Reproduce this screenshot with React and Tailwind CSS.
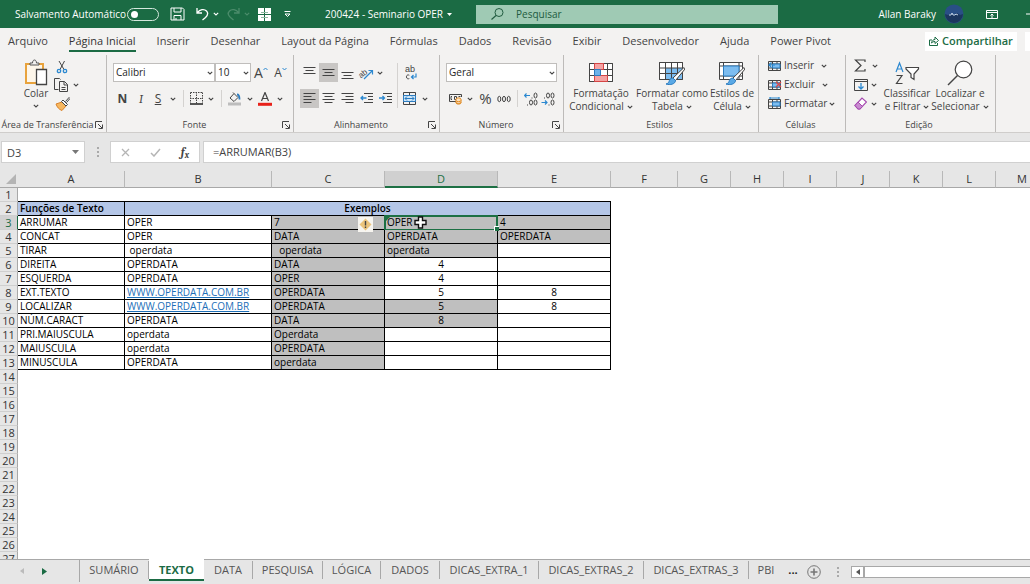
import clsx from "clsx";

const menuTabs = [
  "Arquivo",
  "Página Inicial",
  "Inserir",
  "Desenhar",
  "Layout da Página",
  "Fórmulas",
  "Dados",
  "Revisão",
  "Exibir",
  "Desenvolvedor",
  "Ajuda",
  "Power Pivot",
];

const columns = [
  { name: "A", width: "w-[107px]" },
  { name: "B", width: "w-[147px]" },
  { name: "C", width: "w-[113px]" },
  { name: "D", width: "w-[113px]" },
  { name: "E", width: "w-[113px]" },
  { name: "F", width: "w-[67px]" },
  { name: "G", width: "w-[53px]" },
  { name: "H", width: "w-[53px]" },
  { name: "I", width: "w-[53px]" },
  { name: "J", width: "w-[53px]" },
  { name: "K", width: "w-[53px]" },
  { name: "L", width: "w-[53px]" },
  { name: "M", width: "w-[53px]" },
];

// Values of columns A to E, from row 3 on
const rows = [
  ["ARRUMAR", "OPER", "7", "OPER", "4"],
  ["CONCAT", "OPER", "DATA", "OPERDATA", "OPERDATA"],
  ["TIRAR", " operdata", "  operdata", "operdata", ""],
  ["DIREITA", "OPERDATA", "DATA", "4", ""],
  ["ESQUERDA", "OPERDATA", "OPER", "4", ""],
  ["EXT.TEXTO", "WWW.OPERDATA.COM.BR", "OPERDATA", "5", "8"],
  ["LOCALIZAR", "WWW.OPERDATA.COM.BR", "OPERDATA", "5", "8"],
  ["NÚM.CARACT", "OPERDATA", "DATA", "8", ""],
  ["PRI.MAIUSCULA", "operdata", "Operdata", "", ""],
  ["MAIUSCULA", "operdata", "OPERDATA", "", ""],
  ["MINUSCULA", "OPERDATA", "operdata", "", ""],
];

const grayCells = ["D3", "E3", "D4", "E4", "D5", "D9", "D10"];

const sheets = [
  { name: "SUMÁRIO", width: "w-[69px]" },
  { name: "TEXTO", width: "w-[55px]", active: true },
  { name: "DATA", width: "w-[49px]" },
  { name: "PESQUISA", width: "w-[70px]" },
  { name: "LÓGICA", width: "w-[58px]" },
  { name: "DADOS", width: "w-[59px]" },
  { name: "DICAS_EXTRA_1", width: "w-[99px]" },
  { name: "DICAS_EXTRAS_2", width: "w-[105px]" },
  { name: "DICAS_EXTRAS_3", width: "w-[105px]" },
];

const Icon = ({ w = 16, h = 16, className, children }) => (
  <svg
    width={w}
    height={h}
    viewBox={`0 0 ${w} ${h}`}
    fill="none"
    stroke="currentColor"
    className={clsx("shrink-0", className)}
    aria-hidden="true"
  >
    {children}
  </svg>
);

const Caret = ({ className }) => (
  <Icon w={6} h={4} className={className}>
    <path d="M.8.8 3 3 5.2.8" strokeWidth="1.1" />
  </Icon>
);

const Tool = ({ label, className, children }) => (
  <button
    aria-label={label}
    className={clsx("flex h-[19px] items-center justify-center", className)}
  >
    {children}
  </button>
);

const Divider = ({ className }) => (
  <div className={clsx("w-px shrink-0 bg-[#d4d2d0]", className)} />
);

const Group = ({ label, launcher, className, children }) => (
  <section
    className={clsx(
      "flex shrink-0 flex-col border-r border-[#bdbbb9]",
      className
    )}
  >
    <div className="flex-1">{children}</div>
    <div className="flex h-[14px] items-center pr-[3px] text-[9px]">
      <h2 className="flex-1 text-center whitespace-nowrap">{label}</h2>
      {launcher && (
        <button aria-label={`Opções de ${label}`}>
          <Icon w={8} h={8}>
            <path d="M.5 7V.5H7M3 3l4 4M7.5 3.5v4h-4" />
          </Icon>
        </button>
      )}
    </div>
  </section>
);

const Select = ({ label, value, className }) => (
  <div className={clsx("relative h-[19px]", className)}>
    <select
      aria-label={label}
      defaultValue={value}
      className="h-full w-full appearance-none border border-[#c0bebc] bg-white pl-[2px] text-[#262626]"
    >
      <option>{value}</option>
    </select>
    <Caret className="pointer-events-none absolute top-2 right-[2px]" />
  </div>
);

const Lines = ({ d }) => (
  <Icon w={13} h={13}>
    <path d={d} />
  </Icon>
);

const BigButton = ({ icon, first, second, className }) => (
  <button className={clsx("flex flex-col items-center pt-[3px]", className)}>
    <span className="flex h-[29px] items-center">{icon}</span>
    <span className="leading-[13px] whitespace-nowrap">{first}</span>
    <span className="flex items-center gap-[3px] leading-[13px] whitespace-nowrap">
      {second}
      <Caret />
    </span>
  </button>
);

const Brush = () => (
  <>
    <path d="M25 6.500 14 17l2.500 2.500L26 8z" fill="#fff" stroke="#444" />
    <path
      d="M14 17c-3 0-3.500 2-4 3.500-.5 1.500-1.500 2-3 2.500 4 1.500 9.500 0 9.500-3.500z"
      fill="#5aa9e6"
      stroke="#2b7cc0"
    />
  </>
);

const TitleBar = () => (
  <header className="flex h-7 shrink-0 items-center bg-[#1b6b44] text-[10px] text-white">
    <label className="flex w-[159px] shrink-0 items-center pl-[15px]">
      <span className="flex-1 whitespace-nowrap">Salvamento Automático</span>
      <input type="checkbox" role="switch" className="peer sr-only" />
      <span className="flex h-[13px] w-8 shrink-0 items-center rounded-full border border-[#d5e8dd] px-[3px]">
        <span className="h-[7px] w-[7px] rounded-full bg-white" />
      </span>
    </label>
    <div className="flex shrink-0 items-center pl-[11px]">
      <button aria-label="Salvar" className="w-[26px]">
        <Icon w={15} h={14}>
          <path d="M1 1h11.500L14 2.500V13H1zM4 1v4h7V1M4 13V8.500h7V13M6 13v-2" />
        </Icon>
      </button>
      <button aria-label="Desfazer" className="flex w-[31px] items-center gap-1">
        <Icon w={13} h={14}>
          <path d="M1 1v5h5M1.300 5.700C4 2.500 8 1.500 10.500 4s1 4.500-1 6.500L6.500 13" strokeWidth="1.300" />
        </Icon>
        <Caret />
      </button>
      <button aria-label="Refazer" className="flex w-[31px] items-center gap-1 text-[#4b8c6b]">
        <Icon w={13} h={14}>
          <path d="M12 1v5H7M11.700 5.700C9 2.500 5 1.500 2.500 4s-1 4.500 1 6.500L6.500 13" strokeWidth="1.300" />
        </Icon>
        <Caret />
      </button>
      <button aria-label="Janelas" className="w-[26px]">
        <Icon w={13} h={13} className="fill-white stroke-none">
          <path d="M0 0h6v6H0zM7 0h6v6H7zM0 7h6v6H0zM7 7h6v6H7z" />
          <path d="M3 4.500h7M3 9.500h7" stroke="#8fb9a2" />
        </Icon>
      </button>
      <button aria-label="Personalizar" className="w-[41px]">
        <Icon w={7} h={7}>
          <path d="M.5.500h6M1 3l2.500 2.500L6 3z" />
        </Icon>
      </button>
    </div>
    <button className="flex w-[151px] shrink-0 items-center gap-1 whitespace-nowrap">
      200424 - Seminario OPER
      <Icon w={5} h={3} className="fill-white stroke-none">
        <path d="M0 0h5L2.500 3z" />
      </Icon>
    </button>
    <div className="flex h-[19px] min-w-0 flex-1 items-center gap-3 bg-[#9fcab4] pl-[15px] text-[#215c40]">
      <Icon w={13} h={12}>
        <circle cx="8" cy="4.500" r="4" />
        <path d="M5 7.500.500 11.500" strokeWidth="1.200" />
      </Icon>
      <input
        aria-label="Pesquisar"
        placeholder="Pesquisar"
        className="min-w-0 flex-1 bg-transparent outline-none placeholder:text-[#215c40]"
      />
    </div>
    <div className="flex w-[252px] shrink-0 items-center">
      <span className="w-[166px] pr-2 text-right">Allan Baraky</span>
      <Icon w={20} h={20} className="stroke-none">
        <circle cx="10" cy="10" r="9.500" fill="#294f86" />
        <path d="M1 10a9 9 0 0 0 18 0l-3 1-3-2-3 2-3-1-3 1z" fill="#1b365e" />
        <path d="M5 11h2l1-2 1 2h2l1-1 2 1" stroke="#c3d3e6" />
      </Icon>
      <button aria-label="Opções da faixa de opções" className="ml-[22px]">
        <Icon w={12} h={9}>
          <path d="M.5.500h11v8H.500zM.500 2.500h11M6 8V4M4.500 5.500 6 4l1.500 1.500" />
        </Icon>
      </button>
      <Icon w={4} h={2} className="ml-auto">
        <path d="M0 1h4" />
      </Icon>
    </div>
  </header>
);

const MenuBar = () => (
  <nav className="flex h-[26px] shrink-0 items-center gap-[21px] bg-[#f3f2f1] pl-2 text-[11px]">
    {menuTabs.map((tab) => (
      <button
        key={tab}
        className={clsx(
          "h-[22px] border-b-2 pt-[2px] whitespace-nowrap",
          tab === "Página Inicial"
            ? "border-[#1b6b44] font-medium text-[#333]"
            : "border-transparent"
        )}
      >
        {tab}
      </button>
    ))}
    <div className="ml-auto flex gap-2">
      <button className="flex h-[19px] w-[92px] items-center justify-center gap-[3px] bg-white font-semibold text-[#1b6b44]">
        <Icon w={10} h={10}>
          <path d="M3 4H.500v5.500h8V7M2.500 7C3 4.500 4.500 3.500 6 3.500V1l3.500 3.500L6 7.500V5.500C4.500 5.500 3.500 6 2.500 7z" />
        </Icon>
        Compartilhar
      </button>
      <div className="h-[19px] w-[5px] bg-white" />
    </div>
  </nav>
);

const ClipboardGroup = () => (
  <Group label="Área de Transferência" launcher className="w-[107px]">
    <div className="flex">
      <button className="ml-[18px] flex w-9 flex-col items-center pt-1">
        <Icon w={24} h={27}>
          <path d="M2 5h17v19H2z" stroke="#e8a33d" strokeWidth="2" fill="#fdf6ea" />
          <path d="M6 6V4h2.500c0-4 4-4 4 0H15v2z" fill="#f3f2f1" stroke="#555" />
          <path d="M12.500 10.500h10v15h-10z" fill="#fff" stroke="#444" strokeWidth="1.300" />
        </Icon>
        <span className="mt-[1px] mb-1 leading-[13px]">Colar</span>
        <Caret />
      </button>
      <div>
        <Tool label="Recortar" className="w-4">
          <Icon w={12} h={14} className="mt-1">
            <path d="M3 1l5 8.500M8.500 1 4 9.500" />
            <circle cx="3" cy="11" r="1.700" stroke="#2b88d0" strokeWidth="1.300" />
            <circle cx="9" cy="11" r="1.700" stroke="#2b88d0" strokeWidth="1.300" />
          </Icon>
        </Tool>
        <Tool label="Copiar" className="mt-[1px] gap-[5px]">
          <Icon w={14} h={14}>
            <path d="M4.500 11.500H.500v-11h5l1 1M5.500 3.500h5l3 3v7h-8zM10 3.500v3.500h3.500M7.500 9.500h4M7.500 11.500h4" />
          </Icon>
          <Caret />
        </Tool>
        <Tool label="Pincel de Formatação" className="w-4">
          <Icon w={15} h={15}>
            <path d="M1 8l6-2 4 4-4 4.500C4 13.500 2 11 1 8z" fill="#f7b860" stroke="#d9822b" />
            <path d="M6.500 5.500 11 10l1.500-1.500L8 4zM10.500 5.500l3.500-4 1 1-3.500 4" fill="#fff" stroke="#444" />
          </Icon>
        </Tool>
      </div>
    </div>
  </Group>
);

const FontGroup = () => (
  <Group label="Fonte" launcher className="w-[187px]">
    <div className="flex pt-2 pl-[6px]">
      <Select label="Fonte" value="Calibri" className="w-[102px]" />
      <Select label="Tamanho da fonte" value="10" className="w-9" />
      <Tool label="Aumentar fonte" className="w-[20px] text-[14px]">
        A
        <Icon w={5} h={4} className="mb-2 text-[#2b88d0]">
          <path d="M.5 3 2.500 1l2 2" />
        </Icon>
      </Tool>
      <Tool label="Diminuir fonte" className="w-[19px] text-[12px]">
        A
        <Icon w={5} h={4} className="mb-2 text-[#2b88d0]">
          <path d="M.5 1l2 2 2-2" />
        </Icon>
      </Tool>
    </div>
    <div className="flex items-center pt-[7px] pl-[6px] text-[12px]">
      <Tool label="Negrito" className="w-[19px] font-bold">N</Tool>
      <Tool label="Itálico" className="w-[18px] font-serif italic">I</Tool>
      <Tool label="Sublinhado" className="w-4 underline">S</Tool>
      <Tool label="Mais sublinhados" className="w-[14px]"><Caret /></Tool>
      <Divider className="mx-[3px] h-[17px]" />
      <Tool label="Bordas" className="w-[18px]">
        <Icon w={13} h={13}>
          <path d="M.500.500h12M.500.500v11M12.500.500v11M6.500 0v12M0 6.500h13" strokeDasharray="1.500 1" />
          <path d="M0 12h13" strokeWidth="1.800" />
        </Icon>
      </Tool>
      <Tool label="Mais bordas" className="w-[12px]"><Caret /></Tool>
      <Divider className="mx-1 h-[17px]" />
      <Tool label="Cor de preenchimento" className="w-[18px]">
        <Icon w={14} h={14}>
          <path d="M6 1.500 2 6l4 3.500L10 5.500zM6 1.500 5 .500" />
          <path d="M9 2.500c2 0 2.500 1.500 2.500 5" stroke="#2b7cc0" strokeWidth="1.800" />
          <path d="M0 12h13" stroke="#bdbdbd" strokeWidth="3" />
        </Icon>
      </Tool>
      <Tool label="Mais cores de preenchimento" className="w-[12px]"><Caret /></Tool>
      <Tool label="Cor da fonte" className="w-[18px]">
        <Icon w={14} h={14}>
          <path d="M3.500 9 7 .500 10.500 9M4.700 6.500h4.600" strokeWidth="1.200" />
          <path d="M0 12.300h14" stroke="#e8211a" strokeWidth="3" />
        </Icon>
      </Tool>
      <Tool label="Mais cores da fonte" className="w-[12px]"><Caret /></Tool>
    </div>
  </Group>
);

const AlignGroup = () => (
  <Group label="Alinhamento" launcher className="w-[146px]">
    <div className="flex pt-2 pl-[6px]">
      <div className="w-[97px]">
        <div className="flex">
          <Tool label="Alinhar em cima" className="w-[19px]"><Lines d="M.5 1.500h12M2.500 4.500h8M.500 7.500h12" /></Tool>
          <Tool label="Alinhar no meio" className="w-[19px] bg-[#c8c6c4]"><Lines d="M.5 3.500h12M2.500 6.500h8M.500 9.500h12" /></Tool>
          <Tool label="Alinhar embaixo" className="w-[19px]"><Lines d="M.5 6.500h12M2.500 9.500h8M.500 12.500h12" /></Tool>
          <Tool label="Orientação" className="w-[18px]">
            <Icon w={15} h={14} className="overflow-visible">
              <text x="-1" y="10" fontSize="8" fontFamily="Liberation Sans" stroke="none" fill="#444" transform="rotate(-40 4 7)">ab</text>
              <path d="M5 13 13 5M9.500 4.500h4v4" stroke="#2b88d0" strokeWidth="1.200" />
            </Icon>
          </Tool>
          <Tool label="Mais orientações" className="w-[10px]"><Caret /></Tool>
        </div>
        <div className="mt-[7px] flex">
          <Tool label="Alinhar à esquerda" className="w-[19px] bg-[#c8c6c4]"><Lines d="M.5 1.500h12M.500 4.500h8M.500 7.500h12M.500 10.500h8" /></Tool>
          <Tool label="Centralizar" className="w-[19px]"><Lines d="M.5 1.500h12M2.500 4.500h8M.500 7.500h12M2.500 10.500h8" /></Tool>
          <Tool label="Alinhar à direita" className="w-[19px]"><Lines d="M.5 1.500h12M4.500 4.500h8M.500 7.500h12M4.500 10.500h8" /></Tool>
          <Tool label="Diminuir recuo" className="w-[19px]">
            <Icon w={13} h={13}>
              <path d="M4 1.500h9M8 4.500h5M8 7.500h5M4 10.500h9" />
              <path d="M1 6h5.500M3 4 1 6l2 2" stroke="#2b88d0" strokeWidth="1.300" />
            </Icon>
          </Tool>
          <Tool label="Aumentar recuo" className="w-[19px]">
            <Icon w={13} h={13}>
              <path d="M4 1.500h9M8 4.500h5M8 7.500h5M4 10.500h9" />
              <path d="M0 6h5.500M3.500 4l2 2-2 2" stroke="#2b88d0" strokeWidth="1.300" />
            </Icon>
          </Tool>
        </div>
      </div>
      <Divider className="h-[45px]" />
      <div className="pl-[3px]">
        <Tool label="Quebrar texto" className="w-[20px]">
          <Icon w={14} h={17} className="overflow-visible">
            <text x="1" y="8" fontSize="9" fontFamily="Liberation Sans" stroke="none" fill="#444">ab</text>
            <path d="M5.300 11.200c-3.800-1.600-3.800 4.800 0 3.400" />
            <path d="M12 9.500v3.500H7.500M9.500 11l-2 2 2 2" stroke="#2b88d0" strokeWidth="1.200" />
          </Icon>
        </Tool>
        <div className="mt-[7px] flex">
          <Tool label="Mesclar e centralizar" className="w-[17px]">
            <Icon w={13} h={13}>
              <path d="M.5.500h12v12H.500zM6.500.500v12" />
              <path d="M.5 3.500h12v6H.500z" fill="#cfe6f8" stroke="#2b7cc0" />
              <path d="M2 6.500h9M4 4.500l-2 2 2 2M9 4.500l2 2-2 2" stroke="#2b7cc0" />
            </Icon>
          </Tool>
          <Tool label="Mais opções de mesclagem" className="w-[13px]"><Caret /></Tool>
        </div>
      </div>
    </div>
  </Group>
);

const NumberGroup = () => (
  <Group label="Número" launcher className="w-[124px]">
    <div className="pt-2 pl-[6px]">
      <Select label="Formato de número" value="Geral" className="w-[111px]" />
      <div className="mt-[7px] flex items-center">
        <Tool label="Formato de contabilização" className="w-[18px]">
          <Icon w={15} h={13}>
            <path d="M8 9.500H1.500v-7h12V5M4 4.500H3v3h1M6.500 4.500h2v3h-2zM10.500 4.500h2" />
            <path d="M8 7v4c0 1.500 5 1.500 5 0V7c0-1.500-5-1.500-5 0zM8 8.500c0 1.500 5 1.500 5 0M8 10.300c0 1.500 5 1.500 5 0" fill="#fde3c0" stroke="#e08a24" />
          </Icon>
        </Tool>
        <Tool label="Mais formatos" className="w-[12px]"><Caret /></Tool>
        <Tool label="Porcentagem" className="w-[19px] text-[15px]">%</Tool>
        <Tool label="Separador de milhares" className="w-[18px]">
          <Icon w={14} h={8}>
            <ellipse cx="2.300" cy="4" rx="1.500" ry="2.700" />
            <ellipse cx="7" cy="4" rx="1.500" ry="2.700" />
            <ellipse cx="11.700" cy="4" rx="1.500" ry="2.700" />
          </Icon>
        </Tool>
        <Divider className="mx-1 h-[17px]" />
        <Tool label="Aumentar casas decimais" className="w-[17px]">
          <Icon w={14} h={14}>
            <path d="M.5 3.500H6M2.500 1.500l-2 2 2 2" stroke="#2b88d0" strokeWidth="1.200" />
            <path d="M8 5.500v1M3.500 12.500v1" />
            <ellipse cx="11.500" cy="3.500" rx="1.500" ry="2.500" />
            <ellipse cx="7" cy="10.500" rx="1.500" ry="2.500" />
            <ellipse cx="11.500" cy="10.500" rx="1.500" ry="2.500" />
          </Icon>
        </Tool>
        <Tool label="Diminuir casas decimais" className="w-[18px]">
          <Icon w={14} h={14}>
            <path d="M.5 10.500H6M4 8.500l2 2-2 2" stroke="#2b88d0" strokeWidth="1.200" />
            <path d="M3.500 5.500v1M8 12.500v1" />
            <ellipse cx="7" cy="3.500" rx="1.500" ry="2.500" />
            <ellipse cx="11.500" cy="3.500" rx="1.500" ry="2.500" />
            <ellipse cx="11.500" cy="10.500" rx="1.500" ry="2.500" />
          </Icon>
        </Tool>
      </div>
    </div>
  </Group>
);

const StylesGroup = () => (
  <Group label="Estilos" className="w-[195px]">
    <div className="flex pl-[2px]">
      <BigButton
        className="w-[70px]"
        first="Formatação"
        second="Condicional"
        icon={
          <Icon w={24} h={20}>
            <path d="M.5.500h23v18H.500z" fill="#fff" />
            <path d="M.500 6.500h23M.500 12.500h23M5.500.500v18M18.500.500v18M.5.500h23v18H.500z" />
            <path d="M5.500.500h9v6h-9zM5.500 12.500h13v6h-13z" fill="#f4a3a3" stroke="#d64545" />
            <path d="M5.500 6.500h6v6h-6z" fill="#6cb2ea" stroke="#2b7cc0" />
          </Icon>
        }
      />
      <BigButton
        className="w-[72px]"
        first="Formatar como"
        second="Tabela"
        icon={
          <Icon w={26} h={24}>
            <path d="M.5 1.500h23v17H.500z" fill="#fff" />
            <path d="M6.500 7h17v11.500h-17z" fill="#7dbdf0" stroke="none" />
            <path d="M.500 1.500h23v17H.500zM.500 7h23M.500 12.500h23M6.500 1.500v17M12.500 1.500v17M18.500 1.500v17" />
            <Brush />
          </Icon>
        }
      />
      <BigButton
        className="w-[48px]"
        first="Estilos de"
        second="Célula"
        icon={
          <Icon w={26} h={24}>
            <path d="M.5 1.500h23v17H.500z" fill="#fff" />
            <path d="M.5 5h23M.500 15h23M4.500 1.500v17M20 1.500v17" />
            <path d="M4.500 5H20v10H4.500z" fill="#7dbdf0" stroke="#2b7cc0" />
            <Brush />
          </Icon>
        }
      />
    </div>
  </Group>
);

const cellActions = [
  { name: "Inserir", mark: "M7 6H1M3.500 3.500 1 6l2.500 2.500" },
  { name: "Excluir", mark: "M8 4l5 5M13 4 8 9" },
  { name: "Formatar", mark: "M2 1h9M2 0v2M11 0v2" },
];

const CellsGroup = () => (
  <Group label="Células" className="w-[87px]">
    <div className="pt-[1px] pl-[9px]">
      {cellActions.map(({ name, mark }) => (
        <button key={name} className="flex h-[19px] items-center gap-[2px]">
          <Icon w={14} h={13}>
            <path d="M.5 2.500h12v9H.500zM.500 5h12M.500 9h12M4.500 2.500v9M9 2.500v9" />
            <path d="M4.500 5H12v4H4.500z" fill="#7dbdf0" stroke="#2b7cc0" />
            <path d={mark} stroke={name === "Excluir" ? "#e04848" : "#2b88d0"} strokeWidth="1.200" />
          </Icon>
          {name}
          <Caret className={name === "Formatar" ? "" : "ml-[5px]"} />
        </button>
      ))}
    </div>
  </Group>
);

const EditGroup = () => (
  <Group label="Edição" className="w-[150px]">
    <div className="flex">
      <div className="w-[36px] pt-[1px] pl-2">
        <Tool label="AutoSoma" className="gap-[5px]">
          <Icon w={13} h={13}>
            <path d="M11 3V1H1.500L7 6.500 1.500 12H11v-2" strokeWidth="1.200" />
          </Icon>
          <Caret />
        </Tool>
        <Tool label="Preencher" className="gap-[3px]">
          <Icon w={14} h={12}>
            <path d="M.5.500h13v11H.500zM.500 2.500h13" />
            <path d="M7 4v6M4.500 7.500 7 10l2.500-2.500" stroke="#2b88d0" strokeWidth="1.300" />
          </Icon>
          <Caret />
        </Tool>
        <Tool label="Limpar" className="gap-[4px]">
          <Icon w={13} h={13}>
            <path d="M1 8.500 8 1l4.500 4L6 12H4z" fill="#fff" stroke="#a64ab0" strokeWidth="1.200" />
            <path d="M1 8.500 4 5l4.500 4.500L6 12H4z" fill="#c88bd0" stroke="#a64ab0" />
          </Icon>
          <Caret />
        </Tool>
      </div>
      <BigButton
        className="w-[50px]"
        first="Classificar"
        second="e Filtrar"
        icon={
          <Icon w={25} h={24}>
            <path d="M1 11 4.500 2 8 11M2.200 8h4.600" stroke="#2b88d0" strokeWidth="1.200" />
            <path d="M1.500 14.500H7L1.500 22.500H7.500" strokeWidth="1.200" />
            <path d="M11 6.500h12.500v1.500L19 13v5.500l-3-2V13l-5-5z" fill="#fff" strokeWidth="1.200" />
          </Icon>
        }
      />
      <BigButton
        className="w-[56px]"
        first="Localizar e"
        second="Selecionar"
        icon={
          <Icon w={26} h={26}>
            <circle cx="16.500" cy="9.500" r="8.300" fill="#fff" strokeWidth="1.200" />
            <path d="M10.500 15.500 1 25" strokeWidth="1.500" />
          </Icon>
        }
      />
    </div>
  </Group>
);

const FormulaBar = () => (
  <div className="flex h-[22px] shrink-0 pl-[1px] text-[11px]">
    <div className="relative w-[84px] border border-[#d0d0d0] bg-white">
      <input
        aria-label="Caixa de nome"
        defaultValue="D3"
        className="h-full w-full pl-[5px] outline-none"
      />
      <Icon w={7} h={4} className="absolute top-2 right-[5px] fill-[#777] stroke-none">
        <path d="M0 0h7L3.500 4z" />
      </Icon>
    </div>
    <div className="flex w-[25px] items-center justify-center">
      <Icon w={2} h={10} className="text-[#aaa]">
        <path d="M1 0v10" strokeWidth="2" strokeDasharray="2 2" />
      </Icon>
    </div>
    <div className="flex w-[90px] items-center justify-around border border-[#d0d0d0] bg-white">
      <button aria-label="Cancelar">
        <Icon w={9} h={9} className="text-[#b5b5b5]">
          <path d="M1 1l7 7M8 1 1 8" strokeWidth="1.300" />
        </Icon>
      </button>
      <button aria-label="Inserir">
        <Icon w={11} h={9} className="text-[#b5b5b5]">
          <path d="M1 5l3 3 6-7" strokeWidth="1.500" />
        </Icon>
      </button>
      <button aria-label="Inserir função" className="font-serif text-[12px] font-bold italic">
        f<sub className="text-[9px]">x</sub>
      </button>
    </div>
    <input
      aria-label="Barra de fórmulas"
      defaultValue="=ARRUMAR(B3)"
      className="ml-[3px] min-w-0 flex-1 border border-r-0 border-[#d0d0d0] bg-white pl-[9px] outline-none"
    />
  </div>
);

const RowHeader = ({ n }) => (
  <th
    scope="row"
    className={clsx(
      "h-[14px] border-r border-b border-b-[#cfcfcf] p-0 text-[11px] leading-[13px] font-normal",
      n === 3
        ? "border-r-[#1b6b44] bg-[#d2d2d2] text-[#1b6b44]"
        : "border-r-[#a8a8a8] bg-[#e6e6e6] text-[#333]"
    )}
  >
    {n}
  </th>
);

const Cell = ({ id, value }) => {
  const col = id[0];
  const gray = col === "C" || grayCells.includes(id);
  const numeric = /^\d$/.test(value) && !["C3", "E3"].includes(id);
  return (
    <td
      className={clsx(
        "relative h-[14px] border-r border-b border-black p-0 px-[2px] leading-[13px] whitespace-pre",
        gray && "bg-[#bfbfbf]",
        numeric && "text-center"
      )}
    >
      {value.startsWith("WWW") ? (
        <a href="#site" className="text-[#1c6fb8] underline">{value}</a>
      ) : (
        value
      )}
      {id === "C3" && (
        <button
          aria-label="Verificação de erros"
          className="absolute top-[1px] right-[11px] z-10 flex h-[15px] w-[15px] items-center justify-center bg-[#f7f5f0]"
        >
          <Icon w={13} h={13}>
            <path d="M6.500.500l6 6-6 6-6-6z" fill="#ecc47c" stroke="none" />
            <path d="M6.500 3v4.500M6.500 8.500V10" stroke="#444" strokeWidth="1.400" />
          </Icon>
        </button>
      )}
      {id === "D3" && (
        <>
          <span className="absolute -inset-x-px -top-px -bottom-[2px] border-2 border-[#1d7044]" />
          <span className="absolute -right-[2px] -bottom-[2px] z-10 h-[5px] w-[5px] border-t border-l border-white bg-[#1d7044]" />
          <Icon w={4} h={4} className="absolute top-[1px] left-[1px] fill-[#1d7044] stroke-none">
            <path d="M0 0h4L0 4z" />
          </Icon>
          <Icon w={13} h={13} className="absolute top-0 left-[29px] z-10">
            <path
              d="M4.500 1h4v3.500H12v4H8.500V12h-4V8.500H1v-4h3.500z"
              fill="#fff"
              stroke="#111"
              strokeWidth="1.400"
            />
          </Icon>
        </>
      )}
    </td>
  );
};

const Sheet = () => (
  <div className="min-h-0 flex-1 overflow-hidden bg-white">
    <table className="w-max table-fixed border-separate border-spacing-0 text-[10px] text-black">
      <thead>
        <tr className="h-[17px] bg-[#e6e6e6] text-[11px] leading-[14px] text-[#333]">
          <th className="w-[18px] border-b border-[#a8a8a8] p-0">
            <Icon w={10} h={10} className="ml-[6px] fill-[#b4b4b4] stroke-none">
              <path d="M10 0v10H0z" />
            </Icon>
          </th>
          {columns.map(({ name, width }) => (
            <th
              key={name}
              scope="col"
              className={clsx(
                "border-r border-r-[#b8b8b8] p-0 font-normal",
                width,
                name === "D"
                  ? "border-b-2 border-b-[#1d7044] bg-[#d0d0d0] text-[#1d7044]"
                  : "border-b border-b-[#a8a8a8]"
              )}
            >
              {name}
            </th>
          ))}
        </tr>
      </thead>
      <tbody>
        <tr>
          <RowHeader n={1} />
          <td colSpan={5} className="border-b border-black p-0" />
        </tr>
        <tr className="leading-[13px]">
          <RowHeader n={2} />
          <td className="border-r border-b border-black bg-[#b4c6e7] p-0 px-[2px] font-semibold whitespace-nowrap">
            Funções de Texto
          </td>
          <td colSpan={4} className="border-r border-b border-black bg-[#b4c6e7] p-0 text-center font-semibold">
            Exemplos
          </td>
        </tr>
        {rows.map((row, i) => (
          <tr key={row[0]}>
            <RowHeader n={i + 3} />
            {row.map((value, j) => {
              const id = `${columns[j].name}${i + 3}`;
              return <Cell key={id} id={id} value={value} />;
            })}
          </tr>
        ))}
        {Array.from({ length: 14 }, (_, i) => (
          <tr key={i}>
            <RowHeader n={i + 14} />
          </tr>
        ))}
      </tbody>
    </table>
  </div>
);

const SheetTabs = () => (
  <footer className="flex h-[25px] shrink-0 border-t border-[#a8a8a8] bg-[#e6e6e6] text-[11px] text-[#555]">
    <div className="flex h-[22px] w-[80px] shrink-0 items-center border-r border-[#a8a8a8] pl-5">
      <button aria-label="Planilha anterior" className="w-[22px]">
        <Icon w={4} h={6} className="fill-[#bbb] stroke-none">
          <path d="M4 0v6L0 3z" />
        </Icon>
      </button>
      <button aria-label="Próxima planilha">
        <Icon w={5} h={7} className="fill-[#1b6b44] stroke-none">
          <path d="M0 0v7l5-3.500z" />
        </Icon>
      </button>
    </div>
    {sheets.map(({ name, width, active }) => (
      <button
        key={name}
        className={clsx(
          "shrink-0 whitespace-nowrap",
          width,
          active
            ? "-mt-px h-[22px] border-b-2 border-[#1b6b44] bg-white pt-[2px] font-bold text-[#1b6b44]"
            : "mt-[1px] h-[18px] border-r border-[#a8a8a8]"
        )}
      >
        {name}
      </button>
    ))}
    <button className="mt-[1px] h-[18px] w-[34px] shrink-0">PBI</button>
    <button aria-label="Mais planilhas" className="mt-[1px] h-[18px] w-[20px] shrink-0 font-bold text-[#222]">
      ...
    </button>
    <div className="flex h-[23px] min-w-0 flex-1 items-center">
      <button aria-label="Nova planilha" className="ml-1">
        <Icon w={14} h={14} className="text-[#777]">
          <circle cx="7" cy="7" r="6.300" />
          <path d="M7 3.500v7M3.500 7h7" strokeWidth="1.600" />
        </Icon>
      </button>
      <Icon w={2} h={10} className="ml-4 text-[#aaa]">
        <path d="M1 0v10" strokeWidth="2" strokeDasharray="2 2" />
      </Icon>
      <button
        aria-label="Rolar para a esquerda"
        className="ml-3 flex h-3 w-[13px] shrink-0 items-center justify-center border border-[#a8a8a8] bg-white"
      >
        <Icon w={4} h={6} className="fill-[#555] stroke-none">
          <path d="M4 0v6L0 3z" />
        </Icon>
      </button>
      <div className="h-3 flex-1 border-y border-l border-[#a8a8a8] bg-white" />
    </div>
  </footer>
);

const App = () => (
  <div className="flex h-screen flex-col overflow-hidden bg-[#e6e6e6] font-['Open_Sans','Noto_Sans',sans-serif] text-[#444]">
    <TitleBar />
    <MenuBar />
    <div className="flex h-[79px] shrink-0 overflow-hidden border-b border-[#cfcdcb] bg-[#f3f2f1] pt-[1px] text-[10px]">
      <ClipboardGroup />
      <FontGroup />
      <AlignGroup />
      <NumberGroup />
      <StylesGroup />
      <CellsGroup />
      <EditGroup />
    </div>
    <div className="h-2 shrink-0" />
    <FormulaBar />
    <div className="h-2 shrink-0" />
    <Sheet />
    <SheetTabs />
  </div>
);

export default App;
